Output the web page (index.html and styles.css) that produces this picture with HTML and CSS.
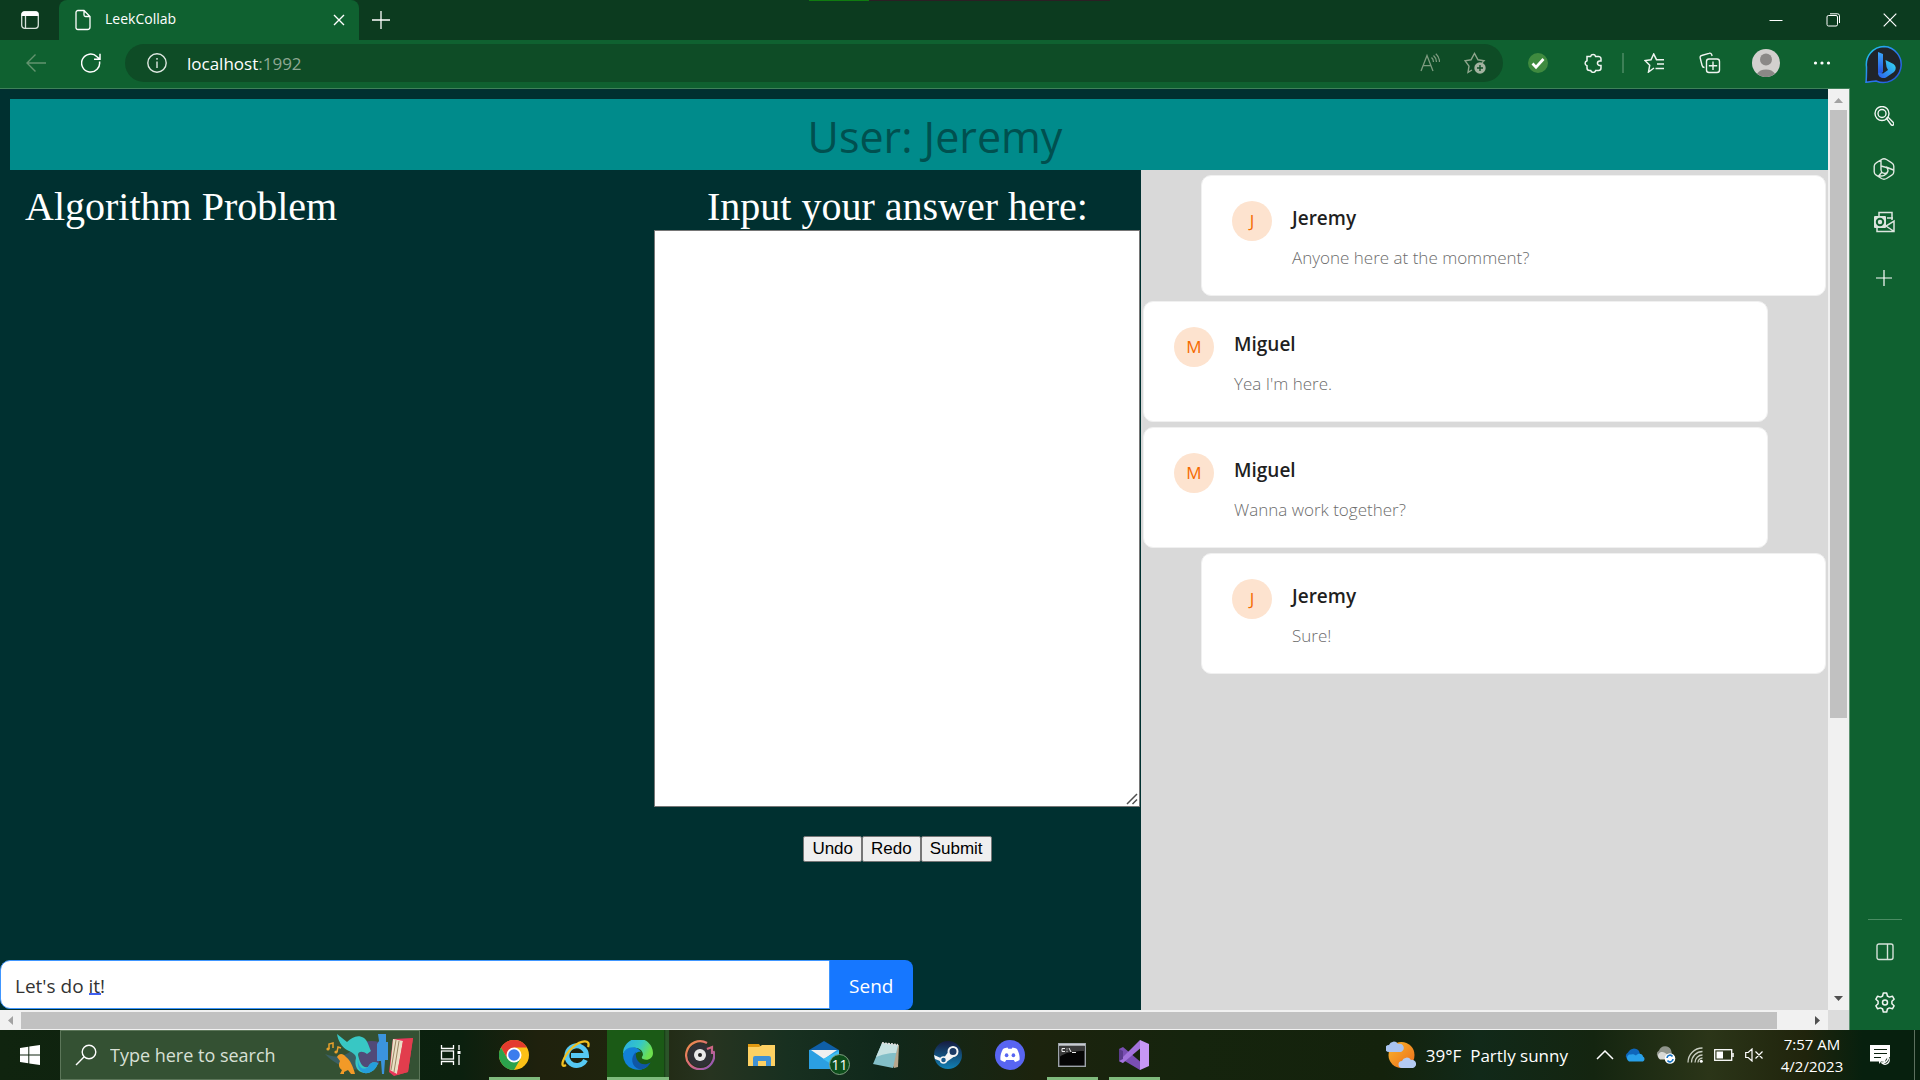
FILE: index.html
```html
<!DOCTYPE html>
<html lang="en">
<head>
<meta charset="utf-8">
<title>LeekCollab</title>
<link rel="stylesheet" href="styles.css">
</head>
<body>
<header class="titlebar">
  <button class="tab-actions" aria-label="Tab actions"><svg width="20" height="20" viewBox="0 0 20 20"><rect x="1.7" y="1.7" width="16.600" height="16.600" rx="3" fill="none" stroke="#d5e2d9" stroke-width="1.300"/><path d="M1.500 6V4.500a3 3 0 0 1 3-3h11a3 3 0 0 1 3 3V6z" fill="#fff"/><path d="M5.500 6v12" stroke="#d5e2d9" stroke-width="1.300"/></svg></button>
  <div class="tab">
    <svg width="16" height="22" viewBox="0 0 16 22" fill="none" stroke="#fff" stroke-width="1.300"><path d="M3 1.500h6l6 6V18a2.500 2.500 0 0 1-2.500 2.500H3A2 2 0 0 1 1 18V3.500a2 2 0 0 1 2-2zM9 1.500V6a1.500 1.500 0 0 0 1.500 1.500H15"/></svg>
    <span class="tab-title">LeekCollab</span>
    <button aria-label="Close tab"><svg width="12" height="12" viewBox="0 0 12 12" stroke="#fff" stroke-width="1.400"><path d="M1 1l10 10M11 1L1 11"/></svg></button>
  </div>
  <button class="new-tab" aria-label="New tab"><svg width="18" height="18" viewBox="0 0 18 18" stroke="#fff" stroke-width="1.300"><path d="M9 0v18M0 9h18"/></svg></button>
  <div class="window-strip"></div>
  <div class="window-controls">
    <button aria-label="Minimize"><svg width="14" height="14" viewBox="0 0 14 14"><path d="M.5 7.500h13" stroke="#fff"/></svg></button>
    <button aria-label="Restore"><svg width="14" height="14" viewBox="0 0 14 14" fill="none" stroke="#fff"><rect x="1" y="2.500" width="10.500" height="10.500" rx="1.500"/><path d="M4 .8h7.500a2 2 0 0 1 2 2V10"/></svg></button>
    <button aria-label="Close"><svg width="14" height="14" viewBox="0 0 14 14" stroke="#fff" stroke-width="1.200"><path d="M.7.700l12.600 12.600M13.300.700L.7 13.300"/></svg></button>
  </div>
</header>

<div class="browser">
  <div class="browser-main">
    <nav class="toolbar" aria-label="Browser toolbar">
      <button aria-label="Back"><svg width="20" height="18" viewBox="0 0 20 18" fill="none" stroke="#63946f" stroke-width="1.400"><path d="M20 9H1M9.500.500L1 9l8.500 8.500"/></svg></button>
      <button aria-label="Refresh"><svg width="20" height="20" viewBox="0 0 20 20" fill="none" stroke="#fff" stroke-width="1.500"><path d="M18.500 8.500A9 9 0 1 1 16 3.700l2.700 2.400M19 .7v5.600h-6"/></svg></button>
      <div class="address">
        <svg width="20" height="20" viewBox="0 0 20 20" fill="none" stroke="#dfe9e2" stroke-width="1.400"><circle cx="10" cy="10" r="9.200"/><path d="M10 8.500V15"/><path d="M10 5v1.800"/></svg>
        <span class="url"><span class="host">localhost</span>:1992</span>
        <div class="address-actions">
          <button aria-label="Read aloud"><svg width="20" height="20" viewBox="0 0 20 20" fill="none" stroke="#7e9c80" stroke-width="1.300"><path d="M1 18L7 2.500 13 18M3 12.700h8M11.500 4.500a6 6 0 0 1 2 4.500M13.500 2.500a9 9 0 0 1 3 6.500M15.800.800A11 11 0 0 1 19.500 9"/></svg></button>
          <button aria-label="Add to favorites"><svg width="22" height="22" viewBox="0 0 22 22" fill="none"><path d="M8 18l-4 2.400 1-6.300L1 8.700l6-.9L10.500 1.500 14 7.800l6 .9-2 2" stroke="#8fa68d" stroke-width="1.400"/><circle cx="16" cy="16" r="5.700" fill="#a3b3a0"/><path d="M16 13v6M13 16h6" stroke="#0e4c26" stroke-width="1.400"/></svg></button>
        </div>
      </div>
      <div class="extensions">
        <button aria-label="Extension status"><svg width="20" height="20" viewBox="0 0 20 20"><circle cx="10" cy="10" r="10" fill="#3f8a3f"/><path d="M4.500 10.500l3.500 3.700L15.500 6" fill="none" stroke="#fff" stroke-width="2.700"/></svg></button>
        <button aria-label="Extensions"><svg width="20" height="20" viewBox="0 0 20 20" fill="none" stroke="#f0f5f1" stroke-width="1.500"><path d="M4 3.500h3.600a2.600 2.600 0 0 1 5 0H15A2.500 2.500 0 0 1 18 6v2h-1.300a2 2 0 0 0 0 4.500H18V15a2.500 2.500 0 0 1-2.500 2.500h-2.800a2.600 2.600 0 0 1-5 0H6.500A2.500 2.500 0 0 1 4 15v-2.300a2.600 2.600 0 0 1 0-5z"/></svg></button>
      </div>
      <div class="divider"></div>
      <div class="profile-tools">
        <button aria-label="Favorites"><svg width="20" height="20" viewBox="0 0 20 20" fill="none" stroke="#f0f5f1" stroke-width="1.500"><path d="M10 15l-5.500 4 1.200-6.700L1 7.500l6-.8L9.700 1l2.800 5.700H20M13 11h7M11.500 15.500H20"/></svg></button>
        <button aria-label="Collections"><svg width="22" height="22" viewBox="0 0 22 22" fill="none" stroke="#f0f5f1" stroke-width="1.400"><path d="M5.500 15.500c-1.500 0-2-.5-2.400-2L1.200 6A2 2 0 0 1 2.600 3.500L10 1.300a2 2 0 0 1 2.700 1.300l.4 1.400"/><rect x="7.500" y="7" width="13" height="13.500" rx="2.500"/><path d="M14 9.500v8.500M9.800 13.800h8.400"/></svg></button>
        <button aria-label="Profile"><svg width="28" height="28" viewBox="0 0 28 28"><circle cx="14" cy="14" r="14" fill="#d2d0ce"/><circle cx="14" cy="10.500" r="6" fill="#8a8886"/><path d="M5 24.800a10 7.500 0 0 1 18 0A14 14 0 0 1 5 24.800z" fill="#8a8886"/></svg></button>
        <button aria-label="Settings and more"><svg width="18" height="6" viewBox="0 0 18 6" fill="#fff"><circle cx="2.500" cy="3" r="1.600"/><circle cx="9" cy="3" r="1.600"/><circle cx="15.500" cy="3" r="1.600"/></svg></button>
      </div>
    </nav>

    <div class="viewport">
      <main class="page">
        <h1 class="user-bar">User: Jeremy</h1>
        <div class="columns">
          <div class="workspace">
            <div class="work-columns">
              <section class="problem"><h2>Algorithm Problem</h2></section>
              <section class="answer">
                <h2><label for="answer">Input your answer here:</label></h2>
                <textarea id="answer"></textarea>
                <div class="answer-actions"><button>Undo</button><button>Redo</button><button>Submit</button></div>
              </section>
            </div>
            <form class="message-form">
              <div class="message-field"><input type="text" value="Let's do it!" aria-label="Message"><span class="grammar-mark"></span></div>
              <button type="button">Send</button>
            </form>
          </div>
          <section class="chat" aria-label="Chat">
            <article class="card own"><div class="avatar">J</div><div class="card-text"><h3>Jeremy</h3><p>Anyone here at the momment?</p></div></article>
            <article class="card"><div class="avatar">M</div><div class="card-text"><h3>Miguel</h3><p>Yea I'm here.</p></div></article>
            <article class="card"><div class="avatar">M</div><div class="card-text"><h3>Miguel</h3><p>Wanna work together?</p></div></article>
            <article class="card own"><div class="avatar">J</div><div class="card-text"><h3>Jeremy</h3><p>Sure!</p></div></article>
          </section>
        </div>
      </main>
      <div class="scroll-y">
        <svg width="21" height="21" viewBox="0 0 21 21"><path d="M6 14l4.500-5 4.500 5z" fill="#a3a3a3"/></svg>
        <div class="thumb-y"></div><div class="track-y"></div>
        <svg width="21" height="21" viewBox="0 0 21 21"><path d="M6 7h9l-4.500 5z" fill="#505050"/></svg>
      </div>
      <div class="scroll-x">
        <svg width="21" height="20" viewBox="0 0 21 20"><path d="M13 6v9l-5-4.500z" fill="#a3a3a3"/></svg>
        <div class="thumb-x"></div><div class="track-x"></div>
        <svg width="21" height="20" viewBox="0 0 21 20"><path d="M8 6v9l5-4.500z" fill="#505050"/></svg>
      </div>
      <div class="scroll-corner"></div>
    </div>
  </div>

  <aside class="sidebar">
    <button class="bing" aria-label="Bing chat"><svg width="40" height="40" viewBox="0 0 40 40"><defs><linearGradient id="ring" x1="0" y1="0" x2="1" y2="1"><stop offset="0" stop-color="#1fd0e8"/><stop offset=".5" stop-color="#2a7bf0"/><stop offset="1" stop-color="#2350d8"/></linearGradient><linearGradient id="bing" x1="0" y1="0" x2="0" y2="1"><stop offset="0" stop-color="#3aa6fa"/><stop offset="1" stop-color="#2450e0"/></linearGradient><linearGradient id="bing2" x1="0" y1="1" x2="1" y2="0"><stop offset="0" stop-color="#2a5cf0"/><stop offset="1" stop-color="#35e0f0"/></linearGradient></defs><path d="M20 1.500a18 18 0 1 1-8 34.500c-3 .2-6 .9-10 1.200C2.500 34 2.500 30 2.500 22A18 18 0 0 1 20 1.500z" fill="#20242a" stroke="url(#ring)" stroke-width="1.500"/><path d="M14 7l5 2v18l-4 3-1-3z" fill="url(#bing)"/><path d="M21.500 15l8 4a5 5 0 0 1 .5 8l-8 5.500c-3 1.500-8 0-8-5l5 1 5-3.500-1.500-3z" fill="url(#bing2)"/></svg></button>
    <button aria-label="Search"><svg width="20" height="20" viewBox="0 0 20 20" fill="none" stroke="#f2f6f3" stroke-width="1.400"><circle cx="8" cy="7.500" r="7"/><circle cx="8" cy="7.500" r="4"/><path d="M12.500 12.300l1.500-1.200 5.300 5.500a1.500 1.500 0 0 1-2 2.300z"/></svg></button>
    <button aria-label="Discover"><svg width="22" height="22" viewBox="0 0 22 22" fill="none" stroke="#dfe8e1" stroke-width="1.400"><path d="M8.500 1.500a5 5 0 0 1 5 0l5.300 3.300a4 4 0 0 1 2 3.500v5.400a4 4 0 0 1-2 3.500l-5.300 3.300a5 5 0 0 1-5 0l-5.300-3.300a4 4 0 0 1-2-3.500V8.300a4 4 0 0 1 2-3.500zM8 1.500v10a4 4 0 0 0 4 4c3 0 4-4 1.500-6L8 8M13 9l7.500 3M15 13c-1 4-6 6-9 4.500L9 14"/></svg></button>
    <button aria-label="Outlook"><svg width="22" height="22" viewBox="0 0 22 22"><path d="M6 5V1.500h13V9M14 7h6M4 16v4.500h17V10l-8 5 7.500 5" fill="none" stroke="#dce5de" stroke-width="1.500"/><rect x="1" y="5" width="12" height="12" rx="1" fill="#dce5de"/><circle cx="7" cy="11" r="3.200" fill="none" stroke="#0f6130" stroke-width="2"/></svg></button>
    <button class="add" aria-label="Add"><svg width="16" height="16" viewBox="0 0 16 16" stroke="#fff" stroke-width="1.200"><path d="M8 0v16M0 8h16"/></svg></button>
    <div class="sidebar-bottom">
      <button aria-label="Sidebar position"><svg width="18" height="18" viewBox="0 0 18 18" fill="none" stroke="#d5e2d9" stroke-width="1.400"><rect x="1" y="1" width="16" height="15.500" rx="2"/><path d="M11.500 1v15.500"/></svg></button>
      <button aria-label="Settings"><svg width="22" height="22" viewBox="0 0 22 22" fill="none" stroke="#f0f5f1" stroke-width="1.500"><path d="M9.300 1h3.400l.7 3 2 1.100 3-.9 1.700 3-2.200 2.100v2.400l2.200 2.100-1.700 3-3-.9-2 1.100-.7 3H9.300l-.7-3-2-1.100-3 .9-1.700-3 2.200-2.100V9.300L1.900 7.200l1.700-3 3 .9 2-1.100z" stroke-linejoin="round"/><circle cx="11" cy="10.500" r="2.500"/></svg></button>
    </div>
  </aside>
</div>

<footer class="taskbar">
  <button class="start" aria-label="Start"><svg width="20" height="20" viewBox="0 0 20 20" fill="#fff"><path d="M0 3l8.300-1.200v7.700H0zM9.300 1.600L20 0v9.500H9.300zM0 10.500h8.300v7.700L0 17zM9.300 10.500H20V20L9.300 18.400z"/></svg></button>
  <label class="search">
    <svg width="22" height="22" viewBox="0 0 22 22" fill="none" stroke="#fff" stroke-width="1.400"><circle cx="14" cy="8" r="6.800"/><path d="M9.200 12.800L1 21"/></svg>
    <input type="text" placeholder="Type here to search">
    <svg width="90" height="46" viewBox="0 0 90 46"><path d="M1 22c12 5 21 2 30-6 6-5 13-6 22-5v22C38 42 16 38 1 22z" fill="#3a5f63"/><path d="M36 12c8-4 13-3 19-2v22c-6 3-13 6-20 6z" fill="#514a78"/><path d="M13 2l10 8c5-5 11-8 17-4 4 3 5 9 7 13l-4 3c-4-3-9-3-9 1 2 8 4 13 10 12 2-4 5-6 10-4-2 7-8 11-14 10-7-1-10-8-8-15 0-4-5-6-9-8-5-3-9-9-10-16z" fill="#38c7c4"/><path d="M34 27c0 8 5 12 10 8 2-4 5-6 10-4-2 7-8 11-14 10-5-2-7-7-6-14z" fill="#259edb"/><path d="M13 25c2-4 6-4 9 0 4 3 7 9 9 17h-4l-3-4-4 2v2h-4l2-4c-3-2-4-5-2-9z" fill="#f29a27"/><path d="M5 17v-5l4-1v5M13 20l1-5 3 1" stroke="#e6a02d" fill="none" stroke-width="1.500"/><circle cx="4" cy="17" r="1.600" fill="#e6a02d"/><circle cx="12" cy="20" r="1.600" fill="#e6a02d"/><path d="M54 2h8v8h2v18h-3l-1 14h-2l-1-13h-4V12l2-3z" fill="#3b94dd"/><path d="M69 7l20-1-5 34-14 4-5-4z" fill="#e8375a"/><path d="M69 7l10 2-6 33-7-4z" fill="#eadfc5"/><path d="M72 8l-5 30M75 9l-5 31" stroke="#9c8663"/><path d="M79 9l10-3-5 34-11 3z" fill="#e23d4d"/></svg>
  </label>
  <button class="task-view" aria-label="Task view"><svg width="22" height="20" viewBox="0 0 22 20" fill="none" stroke="#fff" stroke-width="1.300"><path d="M1.500 0v3.500h12V0M1.500 20v-3.500h12V20M19 0v5M19 10v10"/><rect x="1.500" y="6" width="12" height="8"/><path d="M17.500 7.500h3" stroke-width="3"/></svg></button>
  <div class="apps">
    <button class="app running" aria-label="Chrome"><svg width="30" height="30" viewBox="0 0 30 30"><circle cx="15" cy="15" r="15" fill="#fbc116"/><path d="M2 7.500A15 15 0 0 1 28 7.500H15L8.500 18.800z" fill="#e33b2e"/><path d="M2 7.500L8.500 18.800 21.500 18.800 15 30A15 15 0 0 1 2 7.500z" fill="#2ba24c"/><circle cx="15" cy="15" r="7.500" fill="#fff"/><circle cx="15" cy="15" r="5.800" fill="#3b7ded"/></svg></button>
    <button class="app" aria-label="Internet Explorer"><svg width="30" height="30" viewBox="0 0 30 30"><path d="M24.500 20a9.800 9.800 0 1 1 1-4.500H10" fill="none" stroke="#56c9f3" stroke-width="5"/><path d="M5 25C-2 29 2 16 12 7 20 0 30-1 27 7" fill="none" stroke="#f0c022" stroke-width="2.300"/></svg></button>
    <button class="app active" aria-label="Edge"><svg width="30" height="30" viewBox="0 0 30 30"><defs><linearGradient id="edge" x1="0" y1="0" x2="1" y2=".4"><stop offset="0" stop-color="#27a9e8"/><stop offset=".6" stop-color="#36c9c4"/><stop offset="1" stop-color="#6de04e"/></linearGradient></defs><path d="M0 14A15 15 0 0 1 30 13c0 6-6 8-10 6-2-1-1-2 0-4 0-5-5-8-10-7S1 12 0 14z" fill="url(#edge)"/><path d="M0 15c1-8 13-11 18-3-5-1-9 4-6 10 3 5 9 6 14 3A15 15 0 0 1 0 15z" fill="#1281d8"/><path d="M13 12c-6 5-5 15 4 17.500 5 0 9-4 10.500-7-8 5-16-1-14.500-10.500z" fill="#0f57a5"/></svg></button>
    <button class="app" aria-label="Music"><svg width="30" height="30" viewBox="0 0 30 30"><defs><linearGradient id="mus" x1="0" y1="0" x2="1" y2="1"><stop offset="0" stop-color="#f39244"/><stop offset=".5" stop-color="#d9697b"/><stop offset="1" stop-color="#8154c4"/></linearGradient></defs><circle cx="15" cy="15" r="12" fill="#303136"/><path d="M22 3A14 14 0 1 0 28.500 11M22 9l5-2v7" fill="none" stroke="url(#mus)" stroke-width="2.200"/><circle cx="15" cy="15" r="6" fill="#e9e9e9"/><circle cx="15" cy="15" r="2" fill="#222"/></svg></button>
    <button class="app" aria-label="File Explorer"><svg width="30" height="26" viewBox="0 0 30 26"><path d="M1 2h11l2 3H1z" fill="#e09a12"/><path d="M1 5h11l3-2h13v21H1z" fill="#fdd163"/><path d="M6 24V16a2 2 0 0 1 2-2h14a2 2 0 0 1 2 2v8h-5v-5h-8v5z" fill="#3f91d4"/></svg></button>
    <button class="app" aria-label="Mail, 11 unread"><svg width="30" height="28" viewBox="0 0 30 28"><path d="M0 9L15 0l15 9z" fill="#0f5fa8"/><path d="M0 9h30v19H0z" fill="#2b9fe2"/><path d="M2 9h26l-13 9z" fill="#f0f0f0"/><path d="M30 10v18L14 18z" fill="#3fc0f4"/></svg><span class="badge">11</span></button>
    <button class="app" aria-label="Notepad"><svg width="28" height="28" viewBox="0 0 28 28"><path d="M10 2l17 2-1 22-4 1z" fill="#b7a78d"/><path d="M10 2l16 2-5 23-20-4z" fill="#83bfc8"/><path d="M10 2l16 2-2 8C15 12 10 14 4 16z" fill="#c7e2e2"/><path d="M10 2l16 2" stroke="#ddd" stroke-width="2" stroke-dasharray="2 1"/></svg></button>
    <button class="app" aria-label="Steam"><svg width="28" height="28" viewBox="0 0 28 28"><defs><linearGradient id="steam" x1="0" y1="0" x2="0" y2="1"><stop offset="0" stop-color="#161b40"/><stop offset="1" stop-color="#1181b5"/></linearGradient></defs><circle cx="14" cy="14" r="14" fill="url(#steam)"/><path d="M0 14l9 4 6-8 6 5-10 7-10-4z" fill="#f5f5f5"/><circle cx="19" cy="10.500" r="4.500" fill="#1c3a66" stroke="#f5f5f5" stroke-width="2"/><circle cx="9.500" cy="19" r="3" fill="#1a5a8c" stroke="#f5f5f5" stroke-width="1.500"/></svg></button>
    <button class="app" aria-label="Discord"><svg width="30" height="30" viewBox="0 0 30 30"><circle cx="15" cy="15" r="15" fill="#5865f2"/><path d="M8 9c2-1 3-1.300 4.500-1.500l.8 1.300h3.400l.8-1.300c1.500.2 2.500.5 4.500 1.500 2 3.500 3 7 2.500 11-1.500 1-3 1.500-4.500 2l-1.200-2h-7.600L10 22c-1.500-.5-3-1-4.500-2C5 16 6 12.500 8 9z" fill="#fff"/><ellipse cx="11.600" cy="15.200" rx="1.800" ry="2" fill="#5865f2"/><ellipse cx="18.400" cy="15.200" rx="1.800" ry="2" fill="#5865f2"/></svg></button>
    <button class="app running" aria-label="Command Prompt"><svg width="28" height="24" viewBox="0 0 28 24"><rect x=".7" y=".7" width="26.600" height="22.600" fill="#050505" stroke="#9da3aa" stroke-width="1.400"/><path d="M1 1.800h26" stroke="#c8ccd0" stroke-width="2"/><path d="M1.500 3h25v5c-12 0-20 2-25 6z" fill="#3a3a3a"/><path d="M7 5.500H4v3h3M9 5.500v1M9 7.800v1M11 5l2 4M14 9.500h4" stroke="#eee" fill="none"/></svg></button>
    <button class="app running" aria-label="Visual Studio"><svg width="30" height="30" viewBox="0 0 30 30"><path d="M0 9l4-2 20 17-3 6L4 20v3l-4-2z" fill="#7a4fb3"/><path d="M0 21L21 0l3 6L4 23z" fill="#a373dc"/><path d="M21 0l9 4v22l-9 4z" fill="#c797f5"/><path d="M0 9l4 2v8l-4 2z" fill="#5b3b8c"/></svg></button>
  </div>
  <div class="weather">
    <svg width="30" height="30" viewBox="0 0 30 30"><defs><linearGradient id="sun" x1="0" y1="0" x2="1" y2="1"><stop offset="0" stop-color="#f8b62d"/><stop offset="1" stop-color="#ed6c1a"/></linearGradient></defs><circle cx="15.500" cy="15" r="13" fill="url(#sun)"/><path d="M3 12a3.500 3.500 0 0 1 0-7 5 5 0 0 1 9-1 4 4 0 0 1 3 8z" fill="#a9c3f1"/><path d="M16 28a3.500 3.500 0 0 1 0-7 5 5 0 0 1 9-1 4 4 0 0 1 2 8z" fill="#b4cbf3"/></svg>
    <span>39°F&nbsp; Partly sunny</span>
  </div>
  <div class="tray">
    <svg width="18" height="10" viewBox="0 0 18 10" fill="none" stroke="#fff" stroke-width="1.500"><path d="M1 9l8-8 8 8"/></svg>
    <svg width="20" height="14" viewBox="0 0 20 14"><path d="M4 12A4 4 0 0 1 3 4.500 6.500 6.500 0 0 1 14 3l3 9z" fill="#0f66bb"/><path d="M4 13.500a4 4 0 0 1 0-7c3 0 4-1 7 1 2-3 7-2 7 1a2.800 2.800 0 0 1 0 5z" fill="#28a0ea"/></svg>
    <svg width="20" height="18" viewBox="0 0 20 18"><path d="M4 12A4 4 0 0 1 3 4.500 6.500 6.500 0 0 1 15 4l2 8z" fill="#8f948b"/><path d="M4 13.500a4 4 0 0 1 0-7c3-1 5 0 7 2v5z" fill="#d8dad6"/><circle cx="14" cy="12.500" r="5.300" fill="#fff"/><path d="M11 12a3 3 0 0 1 5.500-1.500M17 13a3 3 0 0 1-5.500 1.500" stroke="#1272c4" stroke-width="1.600" fill="none"/></svg>
    <svg width="16" height="16" viewBox="0 0 16 16" fill="none" stroke="#c9cec2" stroke-width="1.300"><path d="M1 15.500A14.500 14.500 0 0 1 15.500 1M4.500 15.500a11 11 0 0 1 11-11M8 15.500A7.500 7.500 0 0 1 15.500 8M11 15.500a4.500 4.500 0 0 1 4.500-4.500"/><circle cx="14.300" cy="14.300" r="1.500" fill="#fff" stroke="none"/></svg>
    <svg width="20" height="12" viewBox="0 0 20 12"><rect x=".7" y=".7" width="17" height="10.600" fill="none" stroke="#fff" stroke-width="1.300"/><path d="M2.500 2.500H9v7H2.500z" fill="#fff"/><path d="M19 4v4" stroke="#fff" stroke-width="1.500"/></svg>
    <svg width="18" height="14" viewBox="0 0 18 14" fill="none" stroke="#fff" stroke-width="1.200"><path d="M.7 4.500h2.500L7 1v12L3.200 9.500H.7zM10.500 3.500l7 7M17.500 3.500l-7 7"/></svg>
  </div>
  <div class="clock"><span>7:57 AM</span><span>4/2/2023</span></div>
  <button class="notifications" aria-label="Notifications"><svg width="20" height="20" viewBox="0 0 20 20"><path d="M0 0h20v12a6 6 0 0 0-5 5l-4-.5L9 19v-2.500H0z" fill="#fff"/><path d="M4 4.500h13M4 8.500h13M4 12.500h7" stroke="#0b210e" stroke-width="1.200"/><path d="M18 12a4 4 0 1 1-6 6c4 0 6-2 6-6z" fill="none" stroke="#fff" stroke-width="1.300"/></svg></button>
</footer>
</body>
</html>
```
FILE: styles.css
```css
* {
  box-sizing: border-box;
}

body {
  margin: 0;
  height: 100vh;
  display: flex;
  flex-direction: column;
  overflow: hidden;
  font-family: "Segoe UI", "Open Sans", sans-serif;
  color: #fff;
}

button,
input {
  font-family: inherit;
}

svg {
  display: block;
  flex: none;
}

.titlebar button,
.toolbar button,
.sidebar button,
.taskbar button {
  display: flex;
  align-items: center;
  justify-content: center;
  border: 0;
  padding: 0;
  background: none;
  color: inherit;
}

/* Title bar */
.titlebar {
  flex: none;
  height: 40px;
  display: flex;
  background: #0c3b1f;
}

.titlebar .tab-actions {
  width: 59px;
}

.tab {
  width: 300px;
  display: flex;
  align-items: center;
  padding: 0 14px 0 16px;
  gap: 14px;
  border-radius: 8px 8px 0 0;
  background: #0f6130;
}

.tab-title {
  flex: 1;
  font-size: 14px;
  line-height: 18px;
  padding-bottom: 2px;
}

.titlebar .new-tab {
  width: 44px;
}

/* Progress strip of the window behind the browser */
.window-strip {
  flex: 1;
  height: 1px;
  background: linear-gradient(90deg, #107c10 60px, #2b1f24 60px) no-repeat 406px 0 / 301px 1px;
}

.window-controls {
  display: flex;
  padding-right: 2px;
}

.window-controls button {
  width: 57px;
}

/* Browser frame */
.browser {
  flex: 1;
  min-height: 0;
  display: flex;
  background: #0f6130;
}

.browser-main {
  flex: 1;
  min-width: 0;
  display: flex;
  flex-direction: column;
}

.toolbar {
  flex: none;
  height: 49px;
  display: flex;
  align-items: center;
  padding: 0 0 2px 8px;
  border-bottom: 1px solid #3f8159;
}

.toolbar button {
  width: 55px;
  height: 38px;
}

.address {
  flex: 1;
  height: 38px;
  display: flex;
  align-items: center;
  gap: 20px;
  margin-left: 7px;
  padding: 0 6px 0 22px;
  border-radius: 19px;
  background: #0e4c26;
}

.url {
  flex: 1;
  font-size: 17px;
  color: #8fa893;
}

.host {
  color: #fff;
}

.address-actions {
  display: flex;
}

.address-actions button {
  width: 45px;
}

.extensions {
  display: flex;
  margin-left: 7px;
}

.divider {
  width: 2px;
  height: 20px;
  margin: 0 2px;
  background: #3d8057;
}

.profile-tools {
  display: flex;
}

.toolbar .profile-tools button {
  width: 56px;
}

.viewport {
  flex: 1;
  min-height: 0;
  display: grid;
  grid-template-columns: 1fr 21px;
  grid-template-rows: 1fr 20px;
  border-right: 1px solid #5b9270;
}

/* Scrollbars */
.scroll-y,
.scroll-x {
  display: flex;
  background: #f1f1f1;
}

.scroll-y {
  flex-direction: column;
}

.thumb-y {
  flex: 608;
  margin: 0 2px;
  background: #c1c1c1;
}

.track-y {
  flex: 271;
}

.thumb-x {
  flex: 1756;
  margin: 2px 0 1px;
  background: #c1c1c1;
}

.track-x {
  flex: 30;
}

.scroll-corner {
  background: #dcdcdc;
}

/* Page */
.page {
  min-width: 0;
  min-height: 0;
  display: flex;
  flex-direction: column;
  background: #003030;
}

.user-bar {
  margin: 10px 0 0 10px;
  padding-left: 32px;
  height: 71px;
  line-height: 76px;
  text-align: center;
  font-size: 43px;
  font-weight: 400;
  color: #00504f;
  background: #008b8b;
}

.columns {
  flex: 1;
  min-height: 0;
  display: grid;
  grid-template-columns: 1141fr 687fr;
}

.workspace {
  display: flex;
  flex-direction: column;
  justify-content: space-between;
}

.work-columns {
  display: grid;
  grid-template-columns: 654fr 487fr;
}

.problem,
.answer {
  padding-top: 14px;
}

.problem {
  padding-left: 25px;
}

.workspace h2 {
  margin: 0;
  font: 400 40px/46px "Times New Roman", "Liberation Serif", serif;
}

.answer {
  display: flex;
  flex-direction: column;
  align-items: center;
}

.answer textarea {
  width: calc(100% - 1px);
  height: 577px;
  margin-right: 1px;
  border: 1px solid #767676;
  border-radius: 0;
  background: #fff;
  resize: both;
}

.answer textarea::-webkit-resizer {
  background: url("data:image/svg+xml,%3Csvg xmlns='http://www.w3.org/2000/svg' viewBox='0 0 15 15'%3E%3Cpath d='M3 13L13 3M8.500 13L13 8.500' stroke='%23505050' stroke-width='1.500'/%3E%3C/svg%3E") center / 100% 100% no-repeat;
}

.answer-actions {
  display: flex;
  margin-top: 29px;
}

.answer-actions button {
  height: 26px;
  padding: 0 8px;
  border: 1px solid #767676;
  border-radius: 2px;
  background: #efefef;
  color: #000;
  font: 17px/20px "Arial", "Liberation Sans", sans-serif;
}

.message-form {
  display: flex;
  width: 80%;
  height: 50px;
}

.message-field {
  position: relative;
  flex: 1;
}

.message-field input {
  width: 100%;
  height: 49px;
  padding: 2px 14px 0;
  border: 1px solid #4096ff;
  border-radius: 10px 0 0 10px;
  outline: 0;
  background: #fff;
  color: #333;
  font-size: 19px;
}

.grammar-mark {
  position: absolute;
  left: 89px;
  bottom: 15px;
  width: 12px;
  height: 2px;
  background: #3f5ff0;
}

.message-form button {
  width: 83px;
  border: 0;
  border-radius: 0 8px 8px 0;
  padding: 2px 0 0;
  background: #1677ff;
  color: #fff;
  font-size: 19px;
}

/* Chat */
.chat {
  display: flex;
  flex-direction: column;
  gap: 5px;
  padding: 5px 2px;
  background: #d9d9d9;
}

.card {
  width: 625px;
  max-width: 100%;
  height: 121px;
  display: flex;
  gap: 20px;
  padding: 25px 30px;
  border: 1px solid #f0f0f0;
  border-radius: 10px;
  background: #fff;
}

.card.own {
  align-self: flex-end;
}

.avatar {
  flex: none;
  width: 40px;
  height: 40px;
  border-radius: 50%;
  background: #fde3cf;
  color: #f56a00;
  font-size: 17px;
  line-height: 40px;
  text-align: center;
}

.card h3 {
  margin: 2px 0 10px;
  color: #1f1f1f;
  font-size: 19px;
  line-height: 30px;
  font-weight: 600;
}

.card p {
  margin: 0;
  color: #6c6c6c;
  font-size: 17px;
  line-height: 30px;
  font-weight: 300;
}

/* Edge sidebar */
.sidebar {
  flex: none;
  width: 70px;
  padding-right: 2px;
  display: flex;
  flex-direction: column;
}

.sidebar button {
  height: 53px;
}

.sidebar .bing {
  height: 49px;
}

.sidebar .add {
  height: 60px;
}

.sidebar-bottom {
  display: flex;
  flex-direction: column;
  margin: auto 16px 0 18px;
  padding: 6px 0 2px;
  border-top: 1px solid #4b8c63;
}

.sidebar .sidebar-bottom button {
  height: 51px;
}

/* Taskbar */
.taskbar {
  flex: none;
  height: 50px;
  display: flex;
  background: linear-gradient(90deg, #10240f 0, #0b200e 24%, #1f210d 28%, #1f250e 33%, #273420 37%, #183020 41%, #10281b 46%, #1c230d 54%, #15240d 62%, #14220c 72%, #112919 77%, #142510 83%, #2b3518 89%, #20240c 94%, #07200e 97%);
}

.taskbar .start {
  width: 60px;
}

.search {
  width: 360px;
  display: flex;
  align-items: center;
  padding: 0 5px 0 14px;
  border: 1px solid #5c7659;
  background: #345133;
}

.search input {
  flex: 1;
  min-width: 0;
  margin-left: 13px;
  padding: 0;
  border: 0;
  outline: 0;
  background: none;
  font-size: 18px;
}

.search input::placeholder {
  color: #d8e0d6;
  opacity: 1;
}

.taskbar .task-view {
  width: 63px;
  padding-right: 2px;
}

.apps {
  flex: 1;
  display: flex;
}

.taskbar .app {
  position: relative;
  width: 62px;
}

.taskbar .running {
  background: linear-gradient(#7fba7c, #7fba7c) no-repeat center bottom / 51px 3px;
}

.taskbar .active {
  background: linear-gradient(#7fba7c, #7fba7c) no-repeat center bottom / 100% 3px, linear-gradient(90deg, #1b5a16 57px, #123d10 57px, #2b5429 59px);
}

.badge {
  position: absolute;
  right: 5px;
  bottom: 5px;
  width: 21px;
  height: 21px;
  border: 1px solid #7f9f80;
  border-radius: 50%;
  background: #0d4d1b;
  font-size: 14px;
  line-height: 19px;
}

.weather {
  display: flex;
  align-items: center;
  gap: 10px;
  margin-right: 28px;
  font-size: 17px;
}

.tray {
  display: flex;
  align-items: center;
  gap: 11px;
}

.clock {
  width: 98px;
  display: flex;
  flex-direction: column;
  justify-content: center;
  align-items: center;
  font-size: 15px;
  line-height: 22px;
}

.taskbar .notifications {
  width: 54px;
  margin-right: 5px;
  padding-right: 16px;
  border-right: 1px solid #5d705f;
}
```
